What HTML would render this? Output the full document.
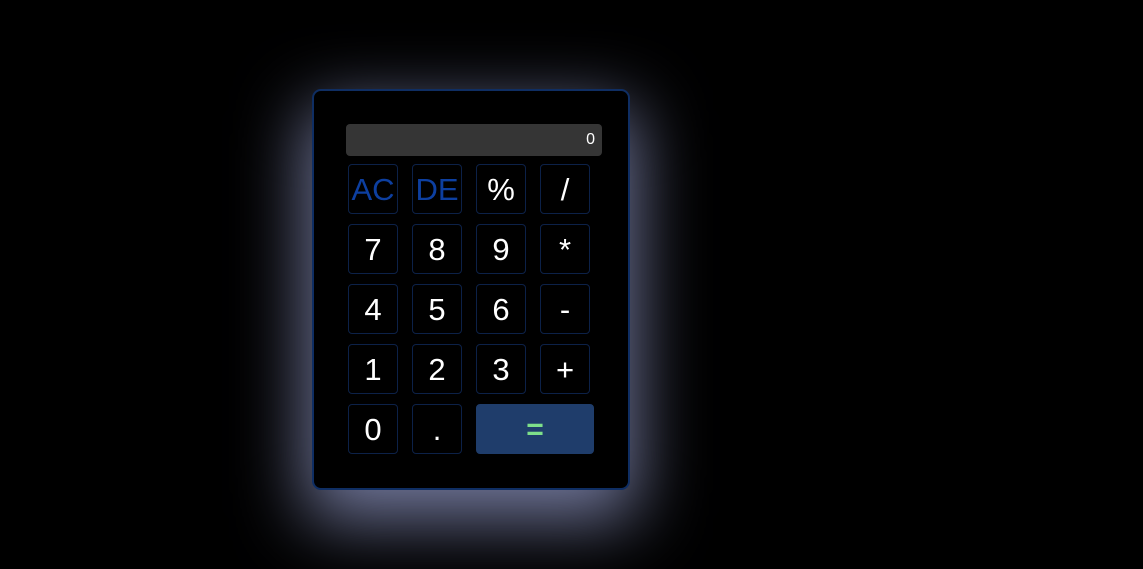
<!DOCTYPE html>
<html><head><style>
html,body{margin:0;padding:0;background:#000;width:1143px;height:569px;overflow:hidden;font-family:"Liberation Sans",Arial,sans-serif}
.calc{position:absolute;left:312px;top:89px;width:314px;height:397px;border:2px solid #0f2e63;border-radius:9px;background:#000;box-shadow:0 24px 70px 6px rgba(135,142,185,.85)}
.disp{position:absolute;left:346px;top:124px;width:256px;height:32px;background:#353535;border-radius:4px;color:#fff;font-size:16px;line-height:32px;text-align:right;box-sizing:border-box;padding-right:7px}
.b{position:absolute;width:48px;height:48px;border:1px solid #0c2148;border-radius:4px;color:#fff;font-size:31px;line-height:50px;text-align:center;background:#000}
.blue{color:#0d3fa0}
.eq{width:116px;background:#1f3d6b;border-color:#1f3d6b;color:#7ee08a;font-weight:bold;font-size:30px}
</style></head><body>
<div class="calc"></div>
<div class="disp">0</div>
<div class="b blue" style="left:348px;top:164px">AC</div>
<div class="b blue" style="left:412px;top:164px">DE</div>
<div class="b" style="left:476px;top:164px">%</div>
<div class="b" style="left:540px;top:164px">/</div>
<div class="b" style="left:348px;top:224px">7</div>
<div class="b" style="left:412px;top:224px">8</div>
<div class="b" style="left:476px;top:224px">9</div>
<div class="b" style="left:540px;top:224px">*</div>
<div class="b" style="left:348px;top:284px">4</div>
<div class="b" style="left:412px;top:284px">5</div>
<div class="b" style="left:476px;top:284px">6</div>
<div class="b" style="left:540px;top:284px">-</div>
<div class="b" style="left:348px;top:344px">1</div>
<div class="b" style="left:412px;top:344px">2</div>
<div class="b" style="left:476px;top:344px">3</div>
<div class="b" style="left:540px;top:344px">+</div>
<div class="b" style="left:348px;top:404px">0</div>
<div class="b" style="left:412px;top:404px">.</div>
<div class="b eq" style="left:476px;top:404px">=</div>
</body></html>
